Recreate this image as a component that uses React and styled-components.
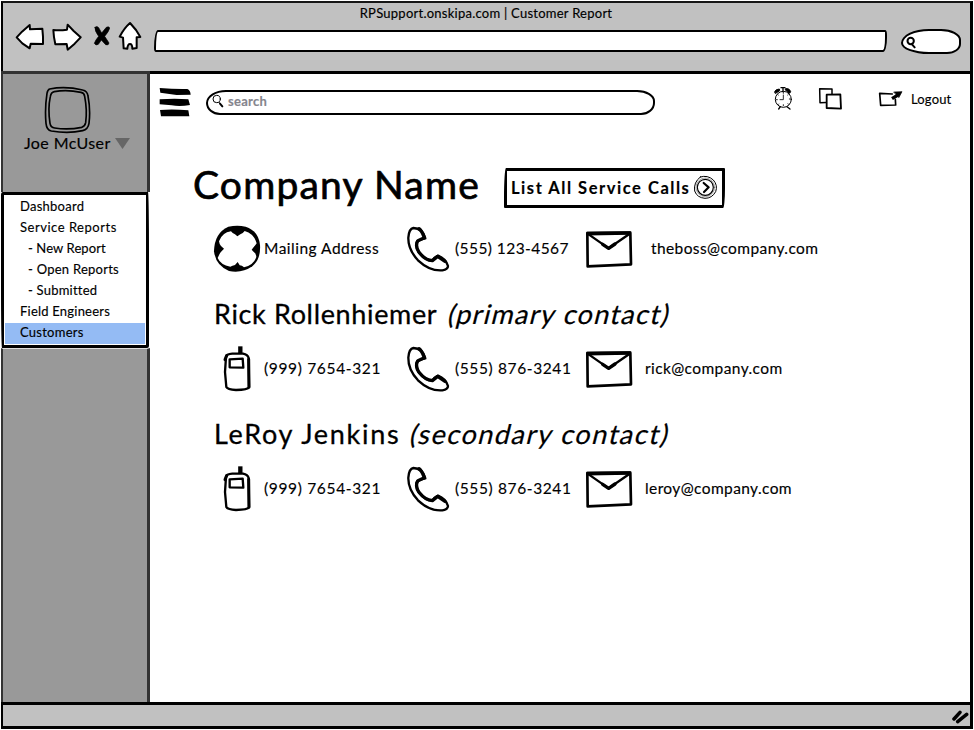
import React from "react";
import styled, { createGlobalStyle } from "styled-components";

const GlobalStyle = createGlobalStyle`
  * { box-sizing: border-box; }
  body { margin: 0; background: #fff; color: #000; font-family: Lato, "Noto Sans", sans-serif; }
  svg { display: block; flex: none; }
`;

const Label = styled.span`
  font-size: ${(p) => p.$size || 13}px;
  font-weight: ${(p) => (p.$bold ? 700 : 400)};
  letter-spacing: ${(p) => p.$track || 0}px;
  color: ${(p) => p.$color || "#000"};
  white-space: nowrap;
  -webkit-text-stroke: ${(p) => p.$stroke || 0.15}px currentColor;
`;

const BrowserFrame = styled.div`
  width: 972px;
  height: 728px;
  margin: 1px;
  display: flex;
  flex-direction: column;
`;
const TitleBar = styled.header`
  height: 70px;
  background: #c1c1c1;
  border: solid #000;
  border-width: 2px 3px 0 2px;
  border-top-color: #161616;
`;
const TitleLine = styled.div`
  height: 20px;
  line-height: 20px;
  display: flex;
  justify-content: center;
  padding-right: 1px;
`;
const AddressRow = styled.div`
  height: 36px;
  display: flex;
  align-items: center;
  padding-left: 12px;
`;
const NavButtons = styled.nav`
  display: flex;
  align-items: center;
  gap: 7px;
  margin-bottom: 9px;
`;
const StopAndHome = styled.div`
  display: flex;
  align-items: center;
  gap: 7px;
  margin: 0 0 1px 4px;
`;
const UrlField = styled.div`
  width: 733px;
  height: 22px;
  margin-left: 12px;
  background: #fff;
  border: 2.5px solid #000;
  border-radius: 4px 2px 4px 2px / 18px 5px 14px 4px;
`;
const BrowserSearch = styled.div`
  width: 60px;
  height: 25px;
  margin-left: 14px;
  display: flex;
  align-items: center;
  padding: 3px 0 0 2px;
  background: #fff;
  border: 2.5px solid #000;
  border-radius: 28px 20px 14px 28px / 14px 11px 10px 11px;
`;
const Body = styled.div`
  height: 631px;
  display: flex;
`;

const Sidebar = styled.aside`
  width: 149px;
  display: flex;
  flex-direction: column;
`;
const SidePanel = styled.div`
  background: #999;
  border: solid #333;
  border-width: ${(p) => (p.$top ? "3px 3px 0 2px" : "0 3px 0 2px")};
  ${(p) => (p.$top ? "height: 121px;" : "flex: 1; border-top: 1px solid #ddd;")}
`;
const AvatarRow = styled.div`
  padding: 12px 0 0 41px;
`;
const UserRow = styled.div`
  display: flex;
  align-items: center;
  gap: 4px;
  height: 18px;
  line-height: 18px;
  padding-left: 21px;
`;
const Menu = styled.ul`
  width: 148px;
  height: 156px;
  margin: 0;
  padding: 2px 1px 1px;
  list-style: none;
  background: #fff;
  border: 3px solid #000;
  border-radius: 2px 1px 2px 1px / 3px 60px 2px 60px;
`;
const MenuItem = styled.li`
  height: 21px;
  line-height: 16px;
  padding-left: ${(p) => (p.$sub ? 23 : 15)}px;
  background: ${(p) => (p.$active ? "#94bbf4" : "transparent")};
`;

const Content = styled.main`
  flex: 1;
  border: solid #000;
  border-width: 3px 3px 0 0;
`;
const AppHeader = styled.div`
  height: 57px;
  display: flex;
  align-items: center;
  padding-left: 9px;
`;
const SearchField = styled.div`
  width: 449px;
  height: 25px;
  margin: 0 0 1px 14px;
  display: flex;
  align-items: center;
  gap: 4px;
  padding: 0 0 2px 4px;
  border: 2px solid #000;
  border-radius: 20px 18px 14px 14px / 13px 11px 12px 12px;
`;
const HeaderActions = styled.div`
  display: flex;
  align-items: center;
  margin: 0 0 8px 118px;
`;
const ActionGap = styled.div`
  width: ${(p) => p.$w}px;
`;
const LogoutLink = styled.a`
  display: flex;
  align-items: center;
  gap: 8px;
  line-height: 20px;
`;
const Page = styled.section`
  padding: 37px 0 0 43px;
`;
const HeadingRow = styled.div`
  display: flex;
  height: 57px;
`;
const CompanyName = styled.h1`
  width: 311px;
  margin: 0;
  font-size: 39px;
  line-height: 32px;
  font-weight: 400;
  letter-spacing: 1.18px;
  white-space: nowrap;
  -webkit-text-stroke: 0.7px #000;
`;
const ServiceButton = styled.button`
  width: 221px;
  height: 40px;
  display: flex;
  align-items: center;
  gap: 2.5px;
  padding: 0 0 1px 4px;
  color: #000;
  background: #fff;
  font-family: inherit;
  border: 3px solid #000;
  border-radius: 2px 1px 2px 1px / 30px 1px 20px 1px;
`;
const ContactRow = styled.div`
  display: grid;
  grid-template-columns: 51px 141px 50px 130px ${(p) => p.$mail}px auto;
  align-items: center;
  height: 48px;
  margin-left: 20px;
  line-height: 20px;
`;
const Cell = styled.div`
  padding-bottom: 3px;
`;
const ContactName = styled.h2`
  height: 72px;
  margin: 0 0 0 21px;
  padding-top: 25px;
  display: flex;
  line-height: 32px;
  font-weight: 400;
`;
const Relation = styled.span`
  display: inline-block;
  margin-left: ${(p) => p.$gap}px;
  font-size: 27px;
  letter-spacing: ${(p) => p.$track}px;
  white-space: nowrap;
  transform: skewX(-14deg);
  -webkit-text-stroke: 0.2px #000;
`;
const StatusBar = styled.footer`
  height: 27px;
  display: flex;
  justify-content: flex-end;
  align-items: center;
  background: #c1c1c1;
  border: 3px solid #000;
  border-left-width: 2px;
`;

const Ink = ({ box, w, h, sw = 6, fill = "none", children }) => (
  <svg width={w} height={h} viewBox={box} fill={fill} stroke="#000" strokeWidth={sw} strokeLinejoin="round" strokeLinecap="round">
    {children}
  </svg>
);

const BackIcon = () => (
  <Ink box="45 66 90 90" w={30} h={30} fill="#fff">
    <path d="M50 112L66 95L89 75L90 88L127 86L129 110L129 132L92 131L89 145L67 130Z" />
  </Ink>
);
const ForwardIcon = () => (
  <Ink box="156 66 90 90" w={30} h={30} fill="#fff">
    <path d="M160 90Q180 92 201 89L203 74L221 93L242 112L224 131L203 149L200 132L166 133Q161 112 160 90Z" />
  </Ink>
);
const StopIcon = () => (
  <Ink box="279 75 54 66" w={18} h={22} fill="#000" sw={2}>
    <path d="M285 82Q291 77 296 83L305 99L319 82Q327 78 329 84Q327 94 314 109L327 129Q326 137 317 134L304 120L295 133Q287 138 283 130Q286 121 296 109Q283 92 285 82Z" />
  </Ink>
);
const HomeIcon = () => (
  <Ink box="354 66 72 90" w={24} h={30} fill="#fff">
    <path d="M390 72L408 93L421 114L410 115L410 147L397 149Q397 135 390 135Q383 135 382 149L371 148L369 116L359 113Q372 88 390 72Z" />
  </Ink>
);
const Magnifier = () => (
  <Ink box="135 108 36 40" w={12} h={14} sw={6}>
    <circle cx="152" cy="122" r="9.5" />
    <path d="M156 132L164 141" />
  </Ink>
);
const ThinMagnifier = () => (
  <Ink box="186 62 36 42" w={12} h={14} sw={3}>
    <circle cx="200" cy="77" r="11" />
    <path d="M207 87L210 91" />
    <path d="M210 91L217 99" strokeWidth="6" />
  </Ink>
);
const Avatar = () => (
  <Ink box="132 258 144 144" w={48} h={48} sw={5}>
    <path d="M149 267Q195 257 248 270Q262 273 264 288Q272 330 267 370Q264 388 248 392Q205 402 154 393Q140 390 138 370Q134 325 141 280Q143 269 149 267Z" />
    <path d="M163 275Q200 268 243 277Q253 279 254 289Q262 330 257 368Q255 379 245 382Q205 390 164 384Q152 382 150 370Q143 327 151 290Q153 277 163 275Z" />
  </Ink>
);
const Caret = () => (
  <svg width="15" height="12" viewBox="0 0 15 12" fill="#666"><path d="M0 1H15L7.5 12Z" /></svg>
);
const Hamburger = () => (
  <svg width="33" height="32" viewBox="27 36 99 96">
    <path d="M29 39Q75 43 112 42Q121 45 122 59L80 60L31 53ZM29 73Q75 69 115 73L120 90Q90 95 65 91L29 88ZM30 105Q70 102 115 106L118 124L33 124Z" />
  </svg>
);
const AlarmIcon = () => (
  <Ink box="68 32 60 75" w={20} h={25} sw={3}>
    <circle cx="99" cy="72" r="24" />
    <path d="M73 49Q76 41 87 41L88 46L76 54ZM106 40Q117 38 121 49L118 54L106 45Z" fill="#000" />
    <path d="M98 49V38M92 37H104M90 94L85 101M110 94L119 101" strokeWidth="4" />
    <path d="M99 59V73H89M99 51V54M117 71H120M78 73H81M99 88V91M112 59L114 57M84 59L82 57M85 86L83 88M113 85L115 87" strokeWidth="2.5" />
  </Ink>
);
const CopyIcon = () => (
  <Ink box="204 34 75 72" w={25} h={24} sw={4.5}>
    <path d="M209 39L246 40L246 80L210 81Z" />
    <path d="M230 57L271 56L273 99L230 97Z" fill="#fff" strokeWidth="5.5" />
  </Ink>
);
const ShareIcon = () => (
  <Ink box="385 44 75 54" w={25} h={18} sw={5}>
    <path d="M428 56L390 54L393 90L438 89L437 72" />
    <path d="M427 70L445 59" strokeWidth="10" strokeLinecap="butt" />
    <path d="M433 50L457 49L448 66Z" fill="#000" strokeWidth="2" />
  </Ink>
);
const NextIcon = () => (
  <Ink box="608 50 75 75" w={25} h={25} sw={3.5}>
    <path d="M630 56Q652 49 669 65Q683 81 676 100Q665 120 644 120Q620 118 613 98Q609 72 630 56Z" strokeWidth="3" />
    <circle cx="645" cy="87" r="28" strokeWidth="1" />
    <circle cx="645" cy="87" r="24" />
    <path d="M640 74L655 87L641 101" strokeWidth="6.5" />
  </Ink>
);
const CompassIcon = () => (
  <svg width="48" height="48" viewBox="39 30 144 144">
    <path d="M85 35Q112 30 137 35Q176 48 180 90Q183 132 157 154Q125 176 87 168Q47 151 42 109Q43 54 85 35Z" />
    <path fill="#fff" d="M93 49Q99 57 105 58L112 64L121 58Q128 56 134 48Q162 56 170 85Q166 91 163 94L155 104L162 112Q168 115 169 126Q161 150 132 157Q126 151 119 151L113 141L105 150Q97 152 91 155Q62 150 53 129Q57 119 62 112L72 101L63 93Q58 88 57 79Q67 52 93 49Z" />
  </svg>
);
const PhoneIcon = () => (
  <Ink box="615 30 150 144" w={50} h={48} sw={7}>
    <path d="M640 39Q627 41 625 68Q624 103 654 136Q689 169 727 166Q744 163 744 153Q737 131 714 122Q703 127 697 137Q676 136 657 113Q644 93 651 79Q663 72 676 70Q668 40 640 39Z" />
    <path d="M657 41Q666 48 673 68L654 77Q644 92 657 112Q676 136 697 137L713 124L735 139" strokeWidth="10" />
  </Ink>
);
const EnvelopeIcon = () => (
  <Ink box="436 38 150 126" w={50} h={42} sw={8}>
    <path d="M443 53L572 52L574 147L510 150L444 153Z" />
    <path d="M441 55L573 53" strokeWidth="11" strokeLinecap="butt" />
    <path d="M447 57L507 99L569 56" strokeWidth="7" />
    <path d="M489 87L507 99L526 86" strokeWidth="10" />
  </Ink>
);
const MobileIcon = () => (
  <Ink box="39 32 144 144" w={48} h={48} sw={7}>
    <path d="M78 68Q79 59 97 58H129Q143 61 146 71L147 159Q143 166 108 167Q82 165 79 158L75 113Z" />
    <path d="M80 64L75 76M146 75L147 158" strokeWidth="9" />
    <path d="M121 36V57" strokeWidth="13" strokeLinecap="butt" />
    <path d="M89 75L128 73L130 100L89 99Z" />
  </Ink>
);
const GripIcon = () => (
  <Ink box="270 145 60 48" w={20} h={16} sw={10.5}>
    <path d="M282 178L300 158M293 186L320 164" />
  </Ink>
);

const menu = [
  { text: "Dashboard", track: 0.25 },
  { text: "Service Reports", track: 0.52 },
  { text: "- New Report", track: 0.1, sub: true },
  { text: "- Open Reports", track: 0.25, sub: true },
  { text: "- Submitted", track: 0.22, sub: true },
  { text: "Field Engineers", track: 0.22 },
  { text: "Customers", track: 0.25, active: true },
];

const Contact = ({ FirstIcon, first, phone, mail, mailWidth = 60 }) => (
  <ContactRow $mail={mailWidth}>
    <FirstIcon />
    <Cell><Label $size={15.5} $track={first[1]}>{first[0]}</Label></Cell>
    <PhoneIcon />
    <Cell><Label $size={15.5} $track={phone[1]}>{phone[0]}</Label></Cell>
    <EnvelopeIcon />
    <Cell><Label $size={15.5} $track={0.4}>{mail}</Label></Cell>
  </ContactRow>
);

export default function App() {
  return (
    <BrowserFrame>
      <GlobalStyle />
      <TitleBar>
        <TitleLine><Label $track={0.25}>RPSupport.onskipa.com | Customer Report</Label></TitleLine>
        <AddressRow>
          <NavButtons>
            <BackIcon />
            <ForwardIcon />
            <StopAndHome><StopIcon /><HomeIcon /></StopAndHome>
          </NavButtons>
          <UrlField />
          <BrowserSearch><Magnifier /></BrowserSearch>
        </AddressRow>
      </TitleBar>
      <Body>
        <Sidebar>
          <SidePanel $top>
            <AvatarRow><Avatar /></AvatarRow>
            <UserRow><Label $size={16} $track={0.4}>Joe McUser</Label><Caret /></UserRow>
          </SidePanel>
          <Menu>
            {menu.map((m) => (
              <MenuItem key={m.text} $sub={m.sub} $active={m.active}>
                <Label $track={m.track}>{m.text}</Label>
              </MenuItem>
            ))}
          </Menu>
          <SidePanel />
        </Sidebar>
        <Content>
          <AppHeader>
            <Hamburger />
            <SearchField>
              <ThinMagnifier />
              <Label $bold $track={0.25} $color="#85858d">search</Label>
            </SearchField>
            <HeaderActions>
              <AlarmIcon />
              <ActionGap $w={25} />
              <CopyIcon />
              <ActionGap $w={35} />
              <LogoutLink><ShareIcon /><Label $track={0.15}>Logout</Label></LogoutLink>
            </HeaderActions>
          </AppHeader>
          <Page>
            <HeadingRow>
              <CompanyName>Company Name</CompanyName>
              <ServiceButton>
                <Label $size={16.5} $bold $track={1.54}>List All Service Calls</Label>
                <NextIcon />
              </ServiceButton>
            </HeadingRow>
            <Contact FirstIcon={CompassIcon} first={["Mailing Address", 0.5]} phone={["(555) 123-4567", 0.43]} mail="theboss@company.com" mailWidth={66} />
            <ContactName>
              <Label $size={27} $track={0.65} $stroke={0.3}>Rick Rollenhiemer</Label>
              <Relation $gap={10} $track={1.3}>(primary contact)</Relation>
            </ContactName>
            <Contact FirstIcon={MobileIcon} first={["(999) 7654-321", 0.66]} phone={["(555) 876-3241", 0.62]} mail="rick@company.com" />
            <ContactName>
              <Label $size={27} $track={1.7} $stroke={0.3}>LeRoy Jenkins</Label>
              <Relation $gap={9} $track={1.55}>(secondary contact)</Relation>
            </ContactName>
            <Contact FirstIcon={MobileIcon} first={["(999) 7654-321", 0.66]} phone={["(555) 876-3241", 0.62]} mail="leroy@company.com" />
          </Page>
        </Content>
      </Body>
      <StatusBar><GripIcon /></StatusBar>
    </BrowserFrame>
  );
}
